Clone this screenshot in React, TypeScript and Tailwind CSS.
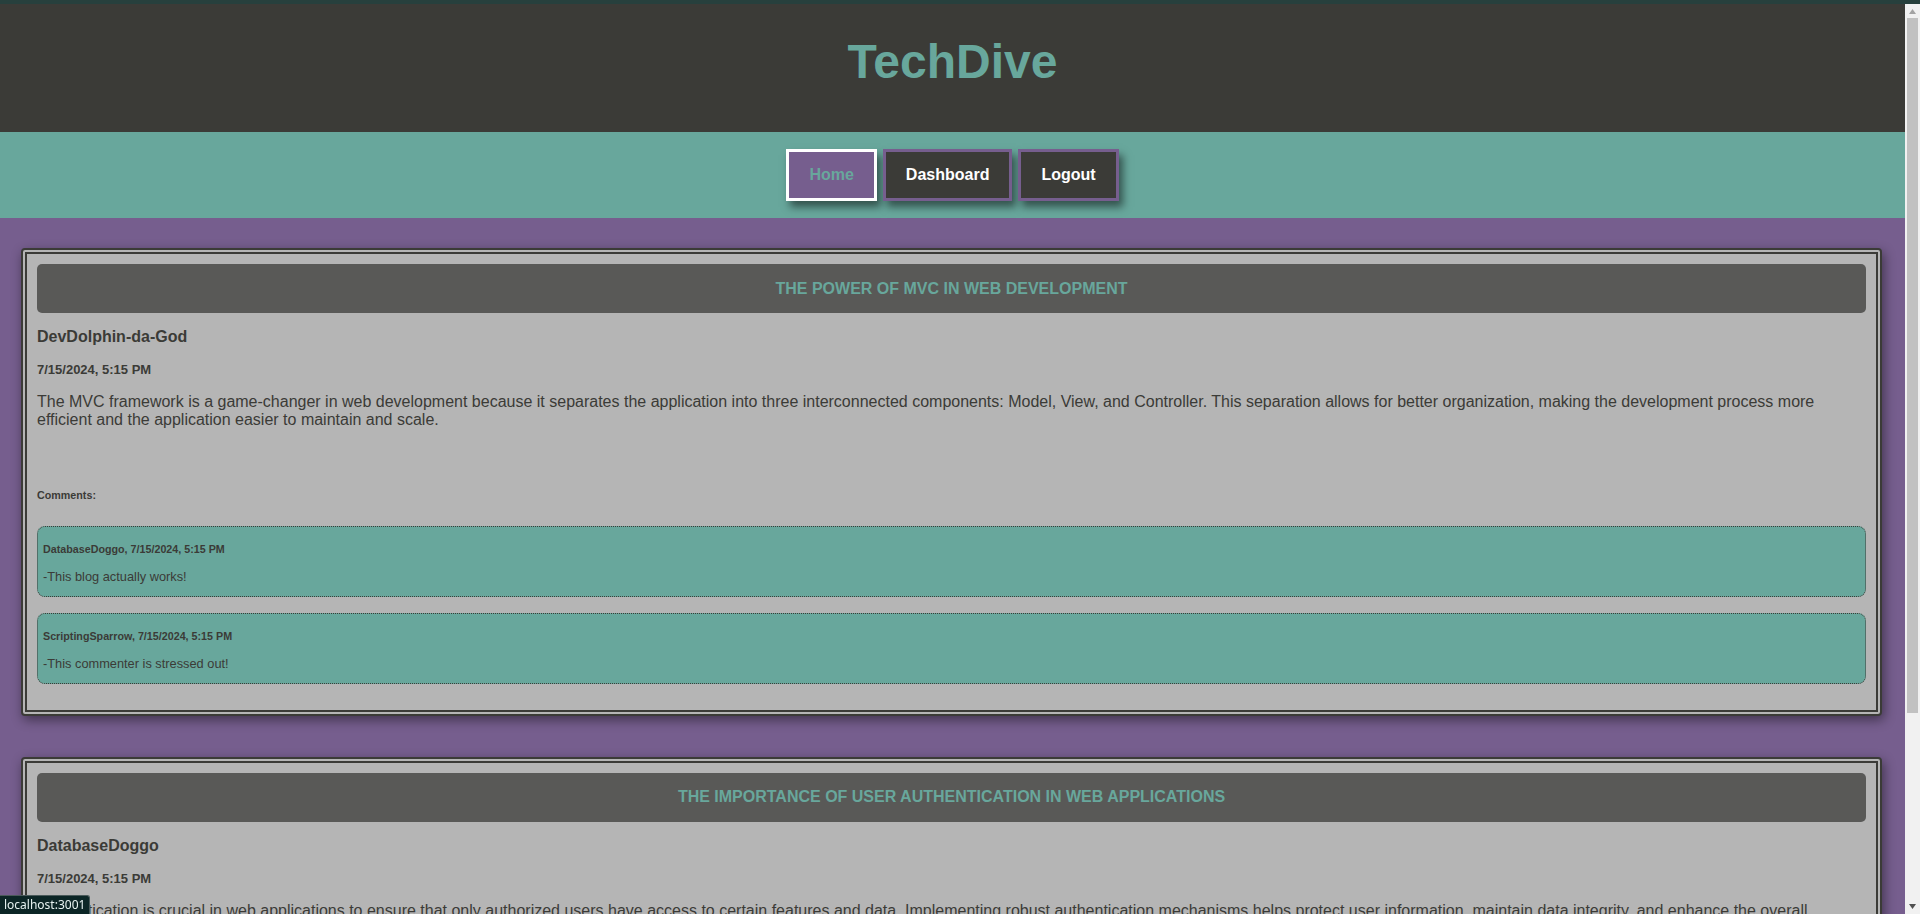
import React from "react";

interface BlogComment {
  author: string;
  date: string;
  text: string;
}

interface Post {
  title: string;
  author: string;
  date: string;
  body: string;
  comments: BlogComment[];
}

const posts: Post[] = [
  {
    title: "The Power of MVC in Web Development",
    author: "DevDolphin-da-God",
    date: "7/15/2024, 5:15 PM",
    body: "The MVC framework is a game-changer in web development because it separates the application into three interconnected components: Model, View, and Controller. This separation allows for better organization, making the development process more efficient and the application easier to maintain and scale.",
    comments: [
      { author: "DatabaseDoggo", date: "7/15/2024, 5:15 PM", text: "-This blog actually works!" },
      { author: "ScriptingSparrow", date: "7/15/2024, 5:15 PM", text: "-This commenter is stressed out!" },
    ],
  },
  {
    title: "The Importance of User Authentication in Web Applications",
    author: "DatabaseDoggo",
    date: "7/15/2024, 5:15 PM",
    body: "Authentication is crucial in web applications to ensure that only authorized users have access to certain features and data. Implementing robust authentication mechanisms helps protect user information, maintain data integrity, and enhance the overall security of the application.",
    comments: [
      { author: "DevDolphin-da-God", date: "7/15/2024, 5:15 PM", text: "-Great read, thanks for sharing!" },
    ],
  },
];

const NavButton: React.FC<{ label: string; active?: boolean }> = ({ label, active }) => (
  <button
    className={`border-[3px] px-[20px] py-[14px] text-[16px] leading-[18px] font-bold shadow-[4px_6px_8px_rgba(0,0,0,0.5)] ${
      active
        ? "border-white bg-[#765e8e] text-[#68a79c]"
        : "border-[#765e8e] bg-[#3b3b37] text-white"
    }`}
  >
    {label}
  </button>
);

const PostCard: React.FC<{ post: Post }> = ({ post }) => (
  <article className="ml-[21px] mr-[23px] mb-[41px] rounded-[4px] border-[6px] border-double border-[#3b3b37] bg-[#b5b5b5] p-[10px] shadow-[2px_4px_12px_rgba(0,0,0,0.45)]">
    <h2 className="flex h-[49px] items-center justify-center rounded-[5px] bg-[#595957] text-[16px] font-bold uppercase text-[#68a79c]">
      {post.title}
    </h2>
    <h4 className="mt-[15px] text-[16px] leading-[18px] font-bold">{post.author}</h4>
    <h5 className="mt-[16px] text-[13px] leading-[15px] font-bold">{post.date}</h5>
    <p className="mt-[16px] text-[16px] leading-[18.4px]">{post.body}</p>

    <h6 className="mt-[59px] text-[10.72px] leading-[12px] font-bold">Comments:</h6>
    <div className="mt-[25px] mb-[16px] flex flex-col gap-[16px]">
      {post.comments.map((c) => (
        <div
          key={c.author + c.text}
          className="rounded-[8px] border border-dotted border-[#3b3b37] bg-[#68a79c] px-[5px] pt-[16px] pb-[12px]"
        >
          <h6 className="text-[10.72px] leading-[12px] font-bold">
            {c.author}, {c.date}
          </h6>
          <p className="mt-[14px] text-[12.8px] leading-[15px]">{c.text}</p>
        </div>
      ))}
    </div>
  </article>
);

// mimic of the browser's classic scrollbar seen in the reference
const Scrollbar: React.FC = () => (
  <aside className="flex h-[910px] w-[15px] shrink-0 flex-col bg-[#f1f1f1]">
    <div className="flex h-[14px] items-center justify-center">
      <svg width="7" height="5" viewBox="0 0 7 5">
        <path d="M3.5 0 L7 5 L0 5 Z" fill="#a3a3a3" />
      </svg>
    </div>
    <div className="mx-[2px] h-[695px] bg-[#c1c1c1]" />
    <div className="mt-auto flex h-[15px] items-center justify-center">
      <svg width="7" height="5" viewBox="0 0 7 5">
        <path d="M0 0 L7 0 L3.5 5 Z" fill="#505050" />
      </svg>
    </div>
  </aside>
);

export default function App() {
  return (
    <div className="min-h-screen bg-[#765e8e] font-['Liberation_Sans',Arial,sans-serif] text-[#3b3b37]">
      <div className="h-[4px] bg-[#27403d]" />
      <div className="flex items-start">
        <div className="min-w-0 flex-1">
          <header className="h-[128px] bg-[#3b3b37] pt-[34px] text-center">
            <h1 className="text-[48px] leading-[48px] font-bold text-[#68a79c]">TechDive</h1>
          </header>

          <nav className="flex h-[86px] items-center justify-center gap-[6px] bg-[#68a79c]">
            <NavButton label="Home" active />
            <NavButton label="Dashboard" />
            <NavButton label="Logout" />
          </nav>

          <main className="pt-[30px] pb-[1px]">
            {posts.map((p) => (
              <PostCard key={p.title} post={p} />
            ))}
          </main>
        </div>
        <Scrollbar />
      </div>

      {/* browser status hint */}
      <div className="fixed bottom-0 left-0 rounded-tr-[3px] border-t border-r border-[#4a5a5a] bg-[#0c2626] px-[4px] py-[1px] text-[12px] leading-[16px] text-[#e6f2f0] font-['Noto_Sans',sans-serif]">
        localhost:3001
      </div>
    </div>
  );
}
